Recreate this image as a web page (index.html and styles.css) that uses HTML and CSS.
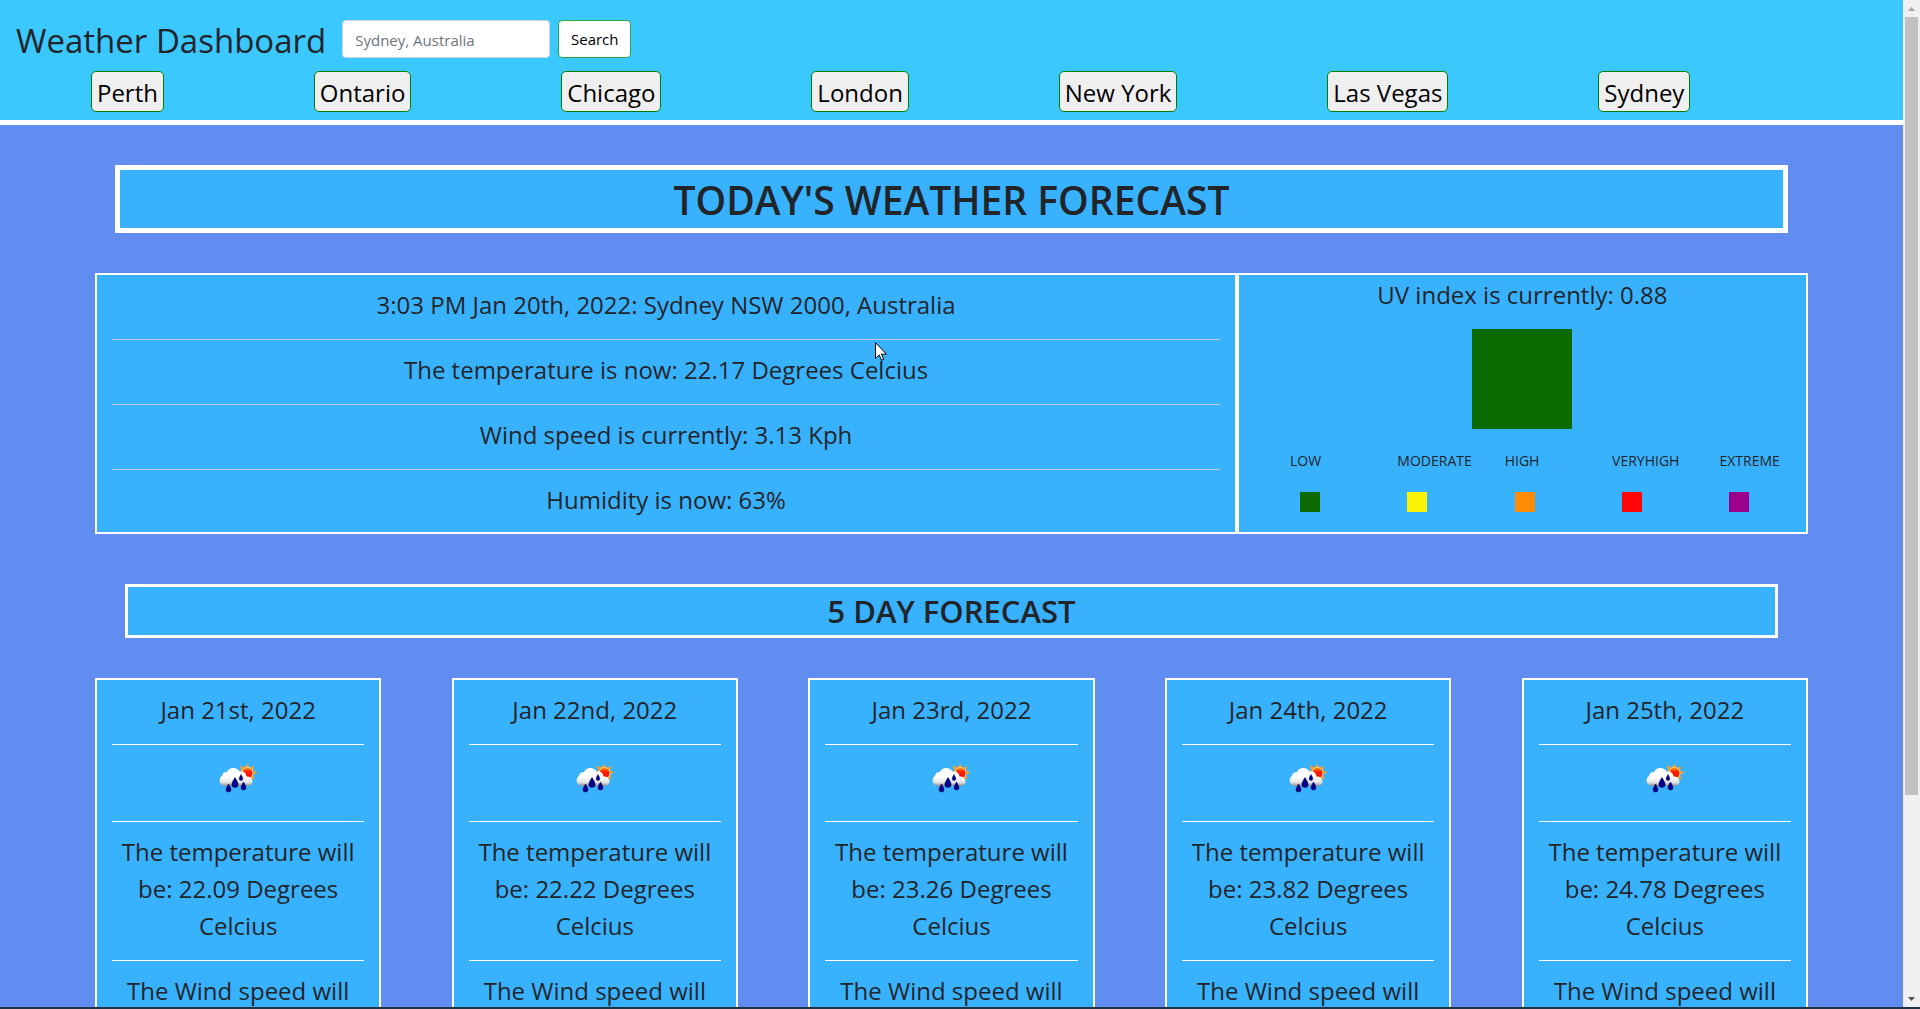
FILE: index.html
```html
<!DOCTYPE html>
<html lang="en">
<head>
<meta charset="utf-8">
<title>Weather Dashboard</title>
<link rel="stylesheet" href="styles.css">
</head>
<body>
<svg class="defs" aria-hidden="true">
  <defs>
    <linearGradient id="cloud" x1="0" y1="0" x2="0" y2="1">
      <stop offset="0.5" stop-color="#ffffff"/><stop offset="0.8" stop-color="#e4e4e4"/><stop offset="1" stop-color="#8e8e8e"/>
    </linearGradient>
    <linearGradient id="sun" x1="0" y1="0" x2="0" y2="1">
      <stop offset="0" stop-color="#ff9000"/><stop offset="0.4" stop-color="#ff2000"/><stop offset="1" stop-color="#f80000"/>
    </linearGradient>
    <symbol id="rain" viewBox="0 0 50 49">
      <path fill="#ff9d1c" d="M34.500 8l2 4 4.500-2-1 4.500 4.500 2-4.500 2 1.500 5-4.500-1.500-2.500 3-3-3-4 1 1-5-4-1.500 4-2-2-5 5 2z"/>
      <circle cx="34.500" cy="17" r="5.500" fill="url(#sun)" stroke="#ffd9a0" stroke-width="1"/>
      <path fill="url(#cloud)" d="M12 30a5.500 5.500 0 0 1-3-10 5 5 0 0 1 5-4 7 7 0 0 1 12.500-.500 5.500 5.500 0 0 1 7 5 5 5 0 0 1 6 4.500q0 5-5 5z"/>
      <g fill="#00008f" stroke="#000058" stroke-width=".5">
        <path d="M15.500 28q-2.500 4-2.500 5.500a2.500 2.500 0 0 0 5 0q0-1.500-2.500-5.500z"/>
        <path d="M22 21.500q-3.200 5-3.200 6.800a3.200 3.200 0 0 0 6.400 0q0-1.800-3.200-6.800z"/>
        <path d="M28 18.500q-1.800 3-1.800 4.200a1.800 1.800 0 0 0 3.600 0q0-1.200-1.800-4.200z"/>
        <path d="M30.500 26q-2.500 4-2.500 5.500a2.500 2.500 0 0 0 5 0q0-1.500-2.500-5.500z"/>
      </g>
    </symbol>
  </defs>
</svg>
<div class="window">
  <div class="page">
    <header class="header">
      <form class="search">
        <h1 class="brand">Weather Dashboard</h1>
        <input class="search-input" type="text" placeholder="Sydney, Australia" aria-label="City">
        <button class="search-button" type="button">Search</button>
      </form>
      <nav class="cities">
        <button class="city" type="button">Perth</button>
        <button class="city" type="button">Ontario</button>
        <button class="city" type="button">Chicago</button>
        <button class="city" type="button">London</button>
        <button class="city" type="button">New York</button>
        <button class="city" type="button">Las Vegas</button>
        <button class="city" type="button">Sydney</button>
      </nav>
    </header>
    <main class="main">
      <h2 class="heading heading-today">TODAY'S WEATHER FORECAST</h2>
      <section class="today">
        <div class="current">
          <p class="row">3:03 PM Jan 20th, 2022: Sydney NSW 2000, Australia</p>
          <p class="row">The temperature is now: 22.17 Degrees Celcius</p>
          <p class="row">Wind speed is currently: 3.13 Kph</p>
          <p class="row">Humidity is now: 63%</p>
        </div>
        <div class="uv">
          <p class="uv-text">UV index is currently: 0.88</p>
          <div class="uv-swatch low"></div>
          <ul class="scale">
            <li class="level">LOW<span class="key low"></span></li>
            <li class="level">MODERATE<span class="key moderate"></span></li>
            <li class="level">HIGH<span class="key high"></span></li>
            <li class="level">VERYHIGH<span class="key very-high"></span></li>
            <li class="level">EXTREME<span class="key extreme"></span></li>
          </ul>
        </div>
      </section>
      <h3 class="heading heading-days">5 DAY FORECAST</h3>
      <section class="days">
        <article class="day">
          <p class="row">Jan 21st, 2022</p>
          <div class="row"><svg class="icon" role="img" aria-label="Rain"><use href="#rain"/></svg></div>
          <p class="row">The temperature will be: 22.09 Degrees Celcius</p>
          <p class="row">The Wind speed will</p>
        </article>
        <article class="day">
          <p class="row">Jan 22nd, 2022</p>
          <div class="row"><svg class="icon" role="img" aria-label="Rain"><use href="#rain"/></svg></div>
          <p class="row">The temperature will be: 22.22 Degrees Celcius</p>
          <p class="row">The Wind speed will</p>
        </article>
        <article class="day">
          <p class="row">Jan 23rd, 2022</p>
          <div class="row"><svg class="icon" role="img" aria-label="Rain"><use href="#rain"/></svg></div>
          <p class="row">The temperature will be: 23.26 Degrees Celcius</p>
          <p class="row">The Wind speed will</p>
        </article>
        <article class="day">
          <p class="row">Jan 24th, 2022</p>
          <div class="row"><svg class="icon" role="img" aria-label="Rain"><use href="#rain"/></svg></div>
          <p class="row">The temperature will be: 23.82 Degrees Celcius</p>
          <p class="row">The Wind speed will</p>
        </article>
        <article class="day">
          <p class="row">Jan 25th, 2022</p>
          <div class="row"><svg class="icon" role="img" aria-label="Rain"><use href="#rain"/></svg></div>
          <p class="row">The temperature will be: 24.78 Degrees Celcius</p>
          <p class="row">The Wind speed will</p>
        </article>
      </section>
    </main>
  </div>
  <div class="scrollbar" aria-hidden="true">
    <svg class="arrow arrow-idle" viewBox="0 0 17 17"><path d="M5 11h7L8.500 7z"/></svg>
    <div class="track"><div class="thumb"></div></div>
    <svg class="arrow" viewBox="0 0 17 17"><path d="M5 7h7l-3.500 4z"/></svg>
  </div>
</div>
<svg class="cursor" viewBox="0 0 12 19" aria-hidden="true"><path fill="#fff" stroke="#000" d="M.5.500v16l3.700-3.500 2.300 5.300 2.200-1-2.300-5.100h5z"/></svg>
</body>
</html>
```
FILE: styles.css
```css
* { box-sizing: border-box; }

body {
  margin: 0;
  height: 100vh;
  overflow: hidden;
  font-family: "Open Sans", "Noto Sans", sans-serif;
  font-size: 24px;
  line-height: 37px;
  color: #212529;
  background: #628df0;
}

h1, h2, h3, p, ul { margin: 0; padding: 0; }
button, input { font-family: inherit; }

.defs { position: absolute; width: 0; height: 0; }

.window {
  display: flex;
  height: 100vh;
  border-bottom: 2px solid #1f3347;
}

.page {
  flex: 1;
  display: flex;
  flex-direction: column;
  overflow: hidden;
}

.header {
  flex: none;
  padding: 20px 16px 8px;
  background: #3bc8ff;
  border-bottom: 5px solid #fff;
}

.search { display: flex; align-items: center; height: 38px; }

.brand { margin-right: 16px; padding-top: 2px; font-size: 33px; font-weight: 400; }

.search-input {
  width: 208px;
  height: 38px;
  margin-right: 8px;
  padding: 2px 12px 0;
  font-size: 15px;
  border: 1px solid #ced4da;
  border-radius: 4px;
}
.search-input::placeholder { color: #6c757d; opacity: 1; }

.search-button {
  width: 73px;
  height: 38px;
  padding: 0;
  font-size: 15px;
  color: #000;
  background: #fff;
  border: 1px solid #28a745;
  border-radius: 4px;
}

.cities {
  display: flex;
  justify-content: space-around;
  width: 93.5%;
  padding-top: 13px;
}

.city {
  height: 41px;
  padding: 2px 5px 0;
  font-size: 24px;
  color: #000;
  background: #efefef;
  border: 1px solid #008000;
  border-radius: 5px;
}

.main {
  flex: 1;
  display: flex;
  flex-direction: column;
  padding: 40px 5% 0;
}

.heading {
  text-align: center;
  font-weight: 600;
  background: #39b2fe;
  border: 5px solid #fff;
}
.heading-today { margin: 0 20px 40px; padding-top: 2px; font-size: 39px; line-height: 56px; }
.heading-days { margin: 50px 30px 40px; font-size: 31px; line-height: 48px; border-width: 3px; }

.today { display: grid; grid-template-columns: 2fr 1fr; }

.current, .uv, .day {
  padding: 0 15px;
  text-align: center;
  background: #39b2fe;
  border: 2px solid #fff;
}

.row { padding: 11px 0 16px; border-bottom: 1px solid #fff; }
.row:last-child { padding-bottom: 14px; border-bottom: 0; }
.current .row { border-color: #c4c8e2; }

.uv-text { padding: 1px 0 16px; }
.uv-swatch { width: 100px; height: 100px; margin: 0 auto 20px; }

.scale { display: grid; grid-template-columns: repeat(5, 1fr); list-style: none; }
.level { padding-left: 36px; width: 0; font-size: 14px; line-height: 24px; text-align: left; }
.key { display: block; width: 20px; height: 20px; margin: 19px 0 0 10px; }

.low { background: #0b6a00; }
.moderate { background: #fbf406; }
.high { background: #ff8c05; }
.very-high { background: #ff0505; }
.extreme { background: #9c008c; }

.days { flex: 1; display: flex; justify-content: space-between; }
.day { flex: none; width: 16.7%; }
.icon { display: block; width: 50px; height: 49px; margin: 0 auto; }

.scrollbar {
  display: flex;
  flex-direction: column;
  width: 17px;
  background: #f0f0f0;
}
.arrow { width: 17px; height: 17px; fill: #505050; }
.arrow-idle { fill: #a3a3a3; }
.track { flex: 1; padding: 0 2px; }
.thumb { height: 80%; background: #c1c1c1; }

.cursor { position: absolute; left: 875px; top: 342px; width: 12px; height: 19px; }
```
